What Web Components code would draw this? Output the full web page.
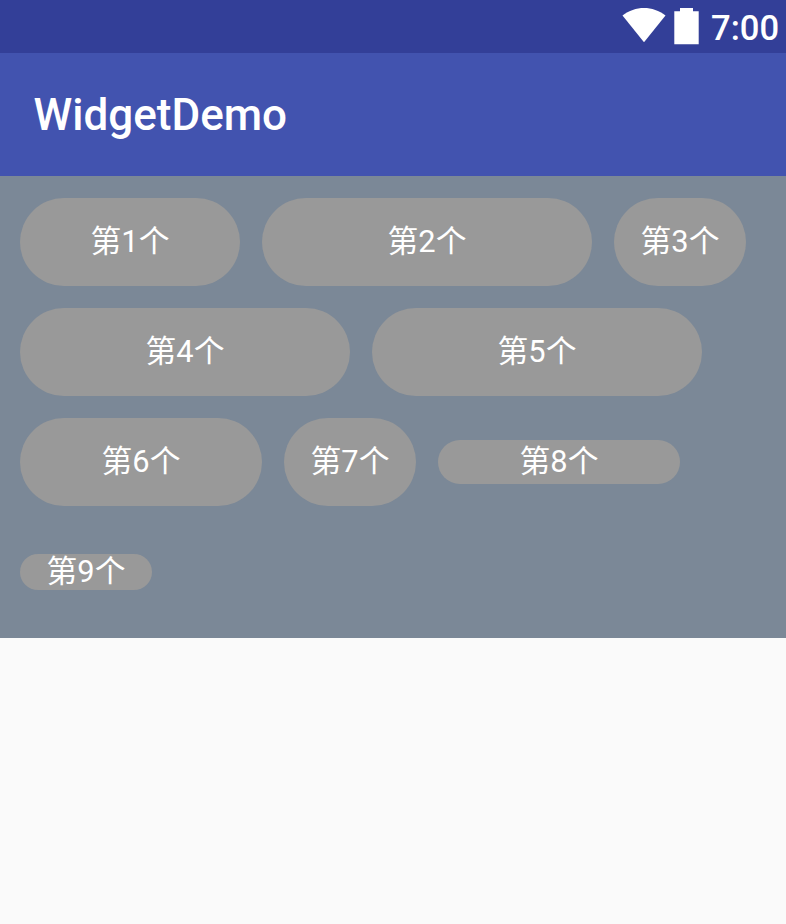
<!DOCTYPE html>
<html lang="zh-CN">
<head>
<meta charset="utf-8">
<title>WidgetDemo</title>
<style>
body { margin: 0; background: #fafafa; color: #fff; font-family: Roboto, "Noto Sans CJK SC", sans-serif; }
</style>
</head>
<body>
<demo-screen></demo-screen>
<script>
class BaseElement extends HTMLElement {
  constructor() {
    super();
    this.attachShadow({ mode: "open" }).innerHTML = this.constructor.markup;
  }
}

customElements.define("status-bar", class extends BaseElement {
  static markup = `
    <style>
      :host { display: flex; justify-content: flex-end; box-sizing: border-box; height: 53px; padding-right: 7px; background: #333f98; }
      svg { display: block; flex: none; width: 80px; height: 53px; }
      .clock { width: 68px; margin-left: 9px; font-weight: 500; font-size: 34.6px; line-height: 57px; height: 53px; white-space: nowrap; }
    </style>
    <svg viewBox="0 0 80 53" fill="#fff" aria-hidden="true">
      <path d="M0.5 15.5C13 5.5 31 5.5 43.5 15.5L22 42.3Z"/>
      <path d="M52.3 11.3H58V8H71V11.3H76.7V44.3H52.3Z"/>
    </svg>
    <div class="clock"><slot></slot></div>`;
});

customElements.define("app-bar", class extends BaseElement {
  static markup = `
    <style>
      :host { display: flex; align-items: center; box-sizing: border-box; height: 123px; padding-left: 33.5px; background: #4253af; font-size: 44px; font-weight: 500; }
    </style>
    <slot></slot>`;
});

customElements.define("flow-panel", class extends BaseElement {
  static markup = `
    <style>
      :host { display: flex; flex-direction: column; gap: 22px; box-sizing: border-box; padding: 22px 20px; background: #7b8897; }
    </style>
    <slot></slot>`;
});

customElements.define("flow-row", class extends BaseElement {
  static markup = `
    <style>
      :host { display: flex; align-items: center; gap: 22px; height: 88px; }
    </style>
    <slot></slot>`;
});

customElements.define("pill-label", class extends BaseElement {
  static markup = `
    <style>
      :host { display: flex; flex: none; align-items: center; justify-content: center; box-sizing: border-box; width: 132px; height: 88px; border-radius: 44px; background: #999; font-size: 30.8px; line-height: 36px; white-space: nowrap; }
      :host([size="s"]) { width: 220px; }
      :host([size="m"]) { width: 242px; }
      :host([size="l"]) { width: 330px; }
      :host([thin]) { height: 44px; }
      :host([wrap]) { height: 36px; }
    </style>
    <slot></slot>`;
});

customElements.define("demo-screen", class extends BaseElement {
  static markup = `
    <style>:host { display: block; height: 924px; }</style>
    <status-bar>7:00</status-bar>
    <app-bar>WidgetDemo</app-bar>
    <flow-panel>
      <flow-row><pill-label size="s">第1个</pill-label><pill-label size="l">第2个</pill-label><pill-label>第3个</pill-label></flow-row>
      <flow-row><pill-label size="l">第4个</pill-label><pill-label size="l">第5个</pill-label></flow-row>
      <flow-row><pill-label size="m">第6个</pill-label><pill-label>第7个</pill-label><pill-label size="m" thin>第8个</pill-label></flow-row>
      <flow-row><pill-label wrap>第9个</pill-label></flow-row>
    </flow-panel>`;
});
</script>
</body>
</html>
